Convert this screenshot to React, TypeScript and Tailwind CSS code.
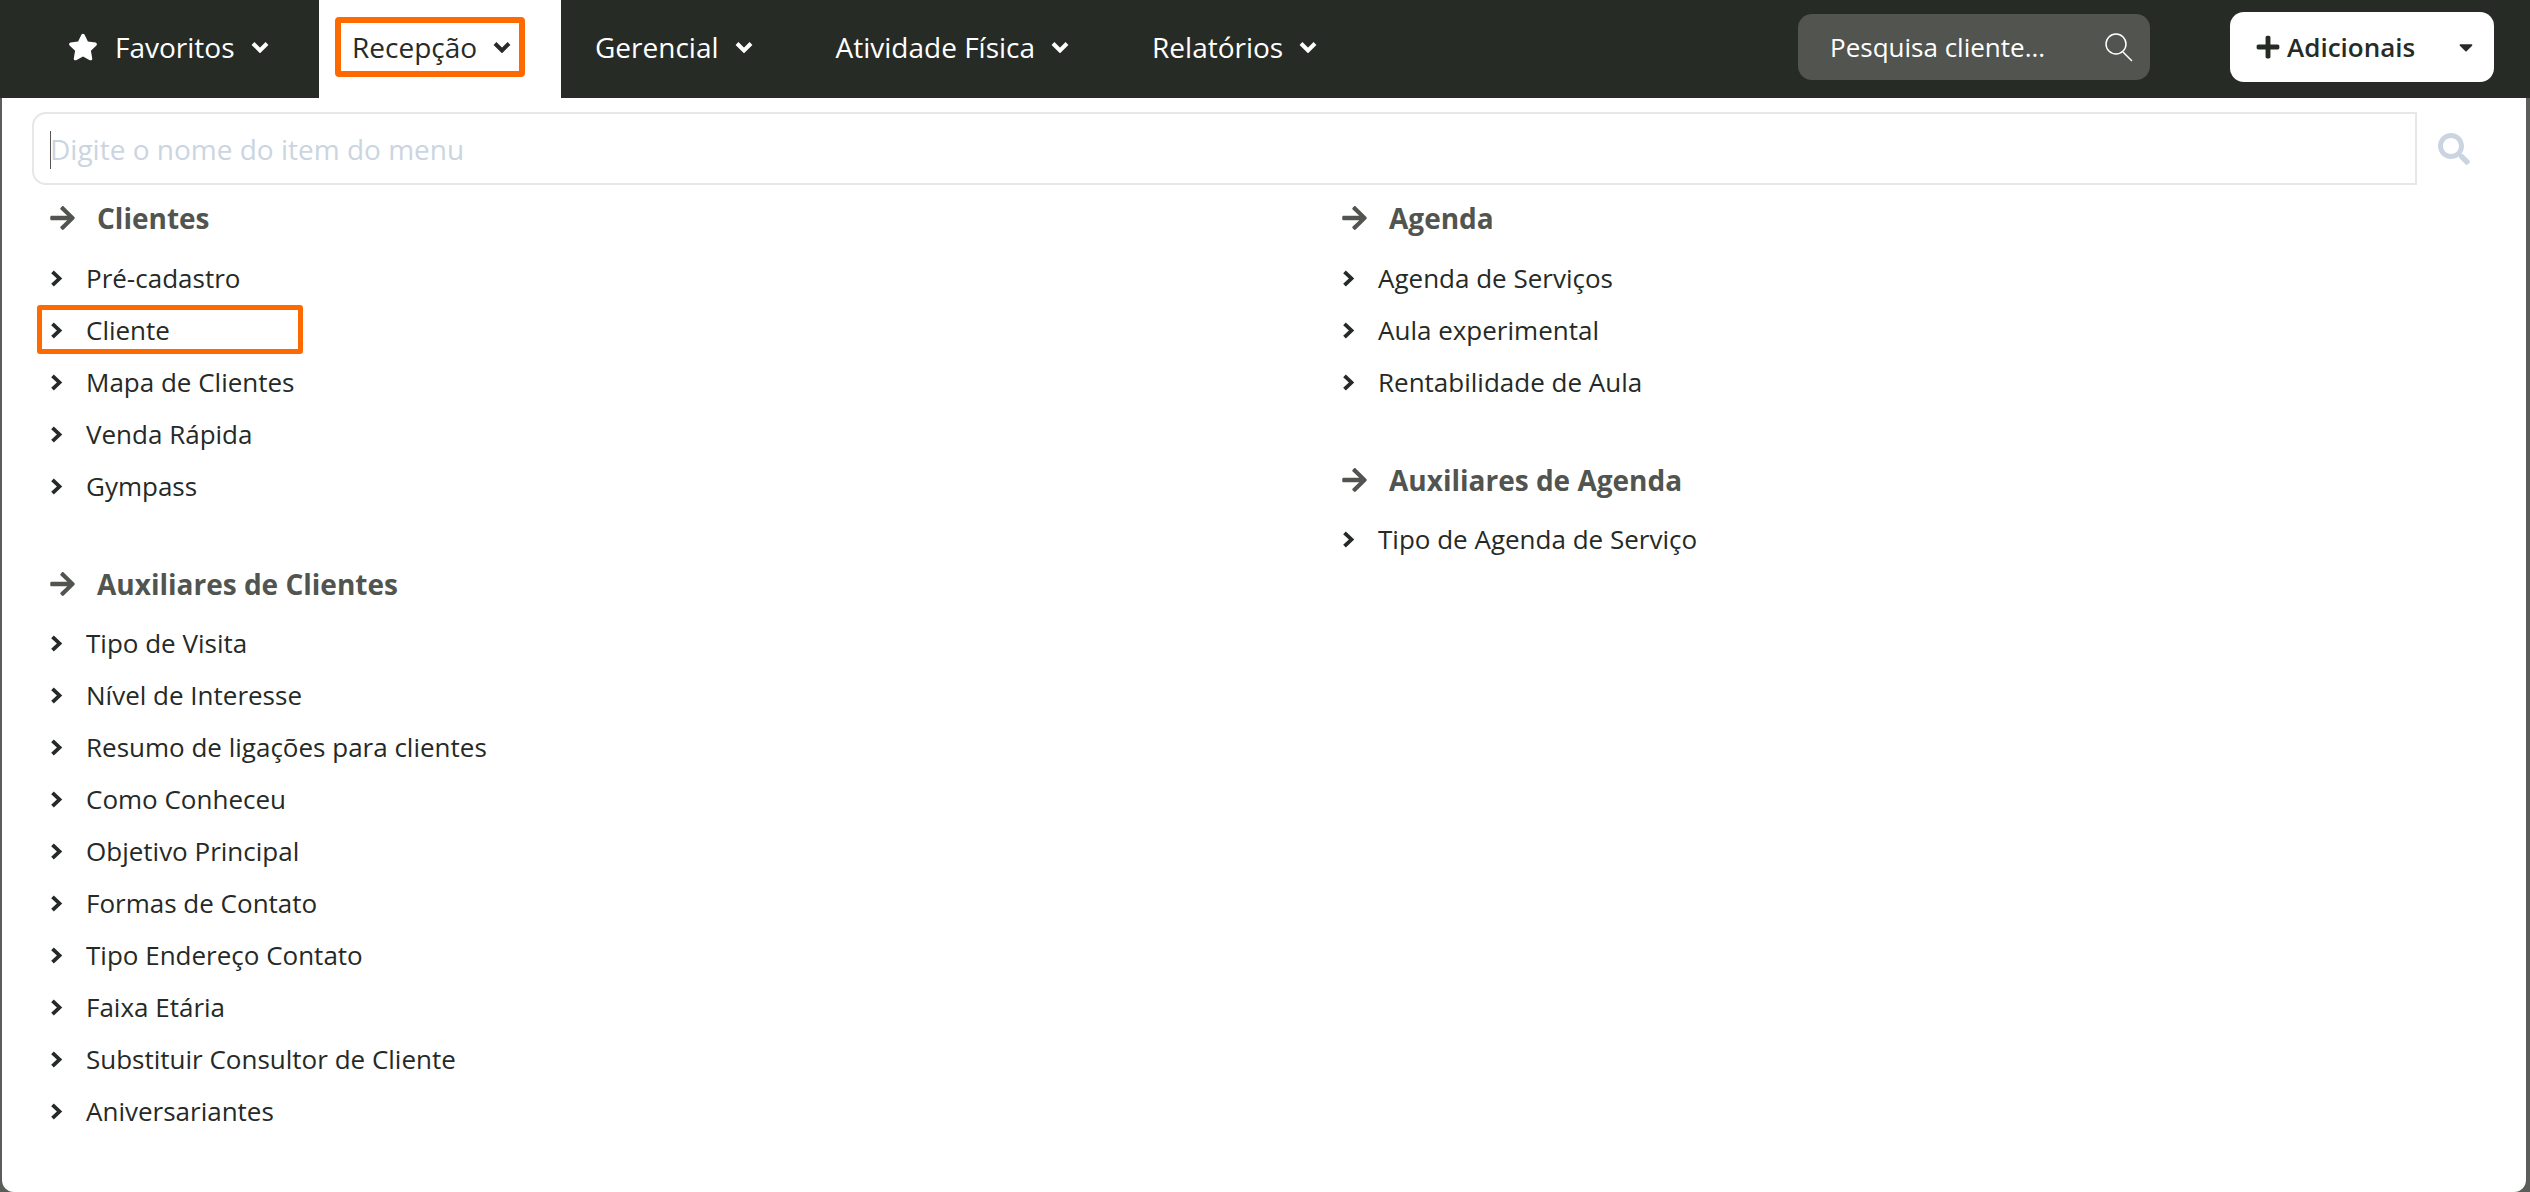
import React from "react";
import { FaStar, FaArrowRight, FaPlus, FaSearch, FaCaretDown } from "react-icons/fa";

function ChevDown({ className }: { className?: string }) {
  return (
    <svg width="18" height="12" viewBox="0 0 18 12" fill="none" stroke="currentColor" strokeWidth="4" className={className}>
      <path d="M2 2.5l7 7 7-7" />
    </svg>
  );
}

function ChevRight() {
  return (
    <svg width="13" height="17" viewBox="0 0 13 17" fill="none" stroke="currentColor" strokeWidth="3.8" className="mr-[23px] shrink-0">
      <path d="M2.5 1.8l7 6.7-7 6.7" />
    </svg>
  );
}

function NavItem({ label, star }: { label: string; star?: boolean }) {
  return (
    <div className="flex items-center h-[98px] pb-[4px] text-white">
      {star && <FaStar className="text-[30px] mr-[17px]" />}
      <span className="text-[28px] leading-none">{label}</span>
      <ChevDown className="ml-[16px]" />
    </div>
  );
}

function Section({
  title,
  items,
  className,
  headClass,
}: {
  title: string;
  items: string[];
  className?: string;
  headClass: string;
}) {
  return (
    <section className={className}>
      <h3 className={`flex items-center h-[44px] text-[#51544f] ${headClass}`}>
        <FaArrowRight className="text-[28px] w-[25px] mr-[22px]" />
        <span className="text-[28px] font-bold leading-none">{title}</span>
      </h3>
      <ul>
        {items.map((t) => (
          <li key={t} className="relative flex items-center h-[52px] text-[26px] text-[#262a26]">
            <ChevRight />
            <span>{t}</span>
            {t === "Cliente" && (
              <div className="absolute left-[-13px] top-[1px] w-[266px] h-[49px] border-[5px] border-[#ff6a00] rounded-[3px]" />
            )}
          </li>
        ))}
      </ul>
    </section>
  );
}

export default function App() {
  return (
    <div
      className="w-[2530px] h-[1192px] overflow-hidden bg-[#5a5d5a] flex flex-col"
      style={{ fontFamily: '"Open Sans", "Noto Sans", sans-serif' }}
    >
      <header className="h-[98px] shrink-0 bg-[#272b26] flex items-center">
        <div className="w-[319px] flex pl-[68px]">
          <NavItem label="Favoritos" star />
        </div>
        <div className="w-[242px] h-[98px] bg-white flex items-center">
          <div className="ml-[16px] mb-[4px] w-[190px] h-[60px] border-[6px] border-[#ff6a00] rounded-[4px] flex items-center pl-[11px] text-[#272b26]">
            <span className="text-[28px] leading-none">Recepção</span>
            <ChevDown className="ml-[16px]" />
          </div>
        </div>
        <div className="flex items-center ml-[34px] gap-[83px]">
          <NavItem label="Gerencial" />
          <NavItem label="Atividade Física" />
          <NavItem label="Relatórios" />
        </div>
        <div className="ml-auto flex items-center pb-[4px]">
          <div className="w-[352px] h-[66px] rounded-[14px] bg-[#51544f] flex items-center justify-between pl-[32px] pr-[17px]">
            <span className="text-[26px] text-white leading-none">Pesquisa cliente...</span>
            <svg width="30" height="30" viewBox="0 0 30 30" fill="none" stroke="white" strokeWidth="1.5">
              <circle cx="13" cy="12" r="10" />
              <path d="M20 20l9 9" />
            </svg>
          </div>
          <div className="ml-[80px] mr-[36px] w-[264px] h-[70px] rounded-[14px] bg-white flex items-center pl-[25px] pr-[17px] text-[#272b26]">
            <FaPlus className="text-[26px] mr-[6px]" />
            <span className="text-[26px] font-semibold leading-none">Adicionais</span>
            <FaCaretDown className="ml-auto text-[22px]" />
          </div>
        </div>
      </header>
      <main className="flex-1 ml-[2px] mr-[4px] bg-white rounded-b-[12px] pt-[14px]">
        <div className="flex items-center">
          <div className="relative ml-[30px] w-[2385px] h-[73px] border-2 border-[#e5e7e9] rounded-l-[14px] flex items-center pl-[16px]">
            <div className="absolute left-[16px] top-[17px] w-px h-[38px] bg-[#555]" />
            <span className="text-[28px] text-[#cbd5e1] leading-none">Digite o nome do item do menu</span>
          </div>
          <FaSearch className="ml-[21px] text-[32px] text-[#cbd5e1]" />
        </div>
        <div className="flex pl-[48px] pt-[11px]">
          <div className="w-[1292px]">
            <Section
              title="Clientes"
              headClass="mb-[12px]"
              items={["Pré-cadastro", "Cliente", "Mapa de Clientes", "Venda Rápida", "Gympass"]}
              className="mb-[50px]"
            />
            <Section
              title="Auxiliares de Clientes"
              headClass="mb-[11px]"
              items={[
                "Tipo de Visita",
                "Nível de Interesse",
                "Resumo de ligações para clientes",
                "Como Conheceu",
                "Objetivo Principal",
                "Formas de Contato",
                "Tipo Endereço Contato",
                "Faixa Etária",
                "Substituir Consultor de Cliente",
                "Aniversariantes",
              ]}
            />
          </div>
          <div>
            <Section
              title="Agenda"
              headClass="mb-[12px]"
              items={["Agenda de Serviços", "Aula experimental", "Rentabilidade de Aula"]}
              className="mb-[50px]"
            />
            <Section title="Auxiliares de Agenda" headClass="mb-[11px]" items={["Tipo de Agenda de Serviço"]} />
          </div>
        </div>
      </main>
    </div>
  );
}
